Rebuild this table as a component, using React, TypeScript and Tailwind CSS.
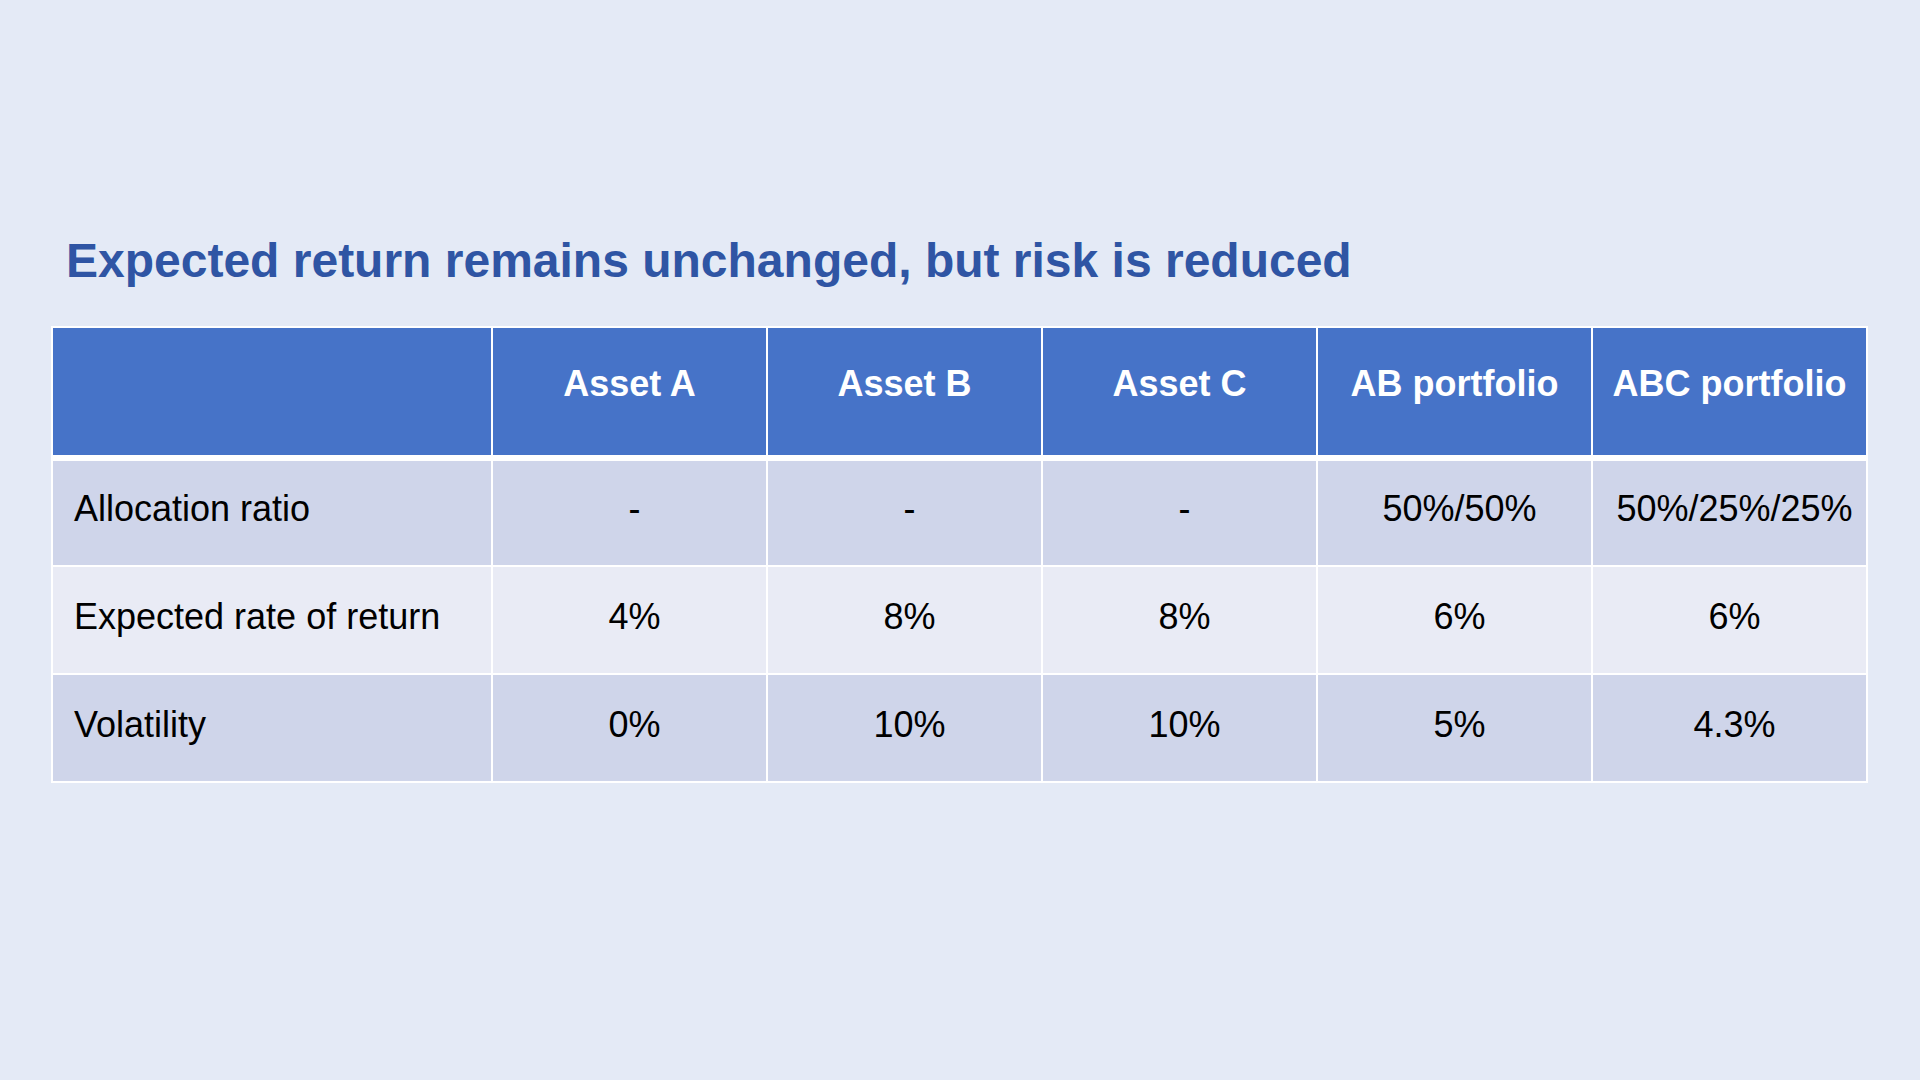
import React from "react";

const headers = ["", "Asset A", "Asset B", "Asset C", "AB portfolio", "ABC portfolio"];
const rows: { cells: string[]; bg: string }[] = [
  { cells: ["Allocation ratio", "-", "-", "-", "50%/50%", "50%/25%/25%"], bg: "bg-[#cfd5ea]" },
  { cells: ["Expected rate of return", "4%", "8%", "8%", "6%", "6%"], bg: "bg-[#e9ebf5]" },
  { cells: ["Volatility", "0%", "10%", "10%", "5%", "4.3%"], bg: "bg-[#cfd5ea]" },
];

export default function App() {
  return (
    <div
      className="w-[1920px] h-[1080px] bg-[#e4eaf6] overflow-hidden"
      style={{ fontFamily: '"Liberation Sans", Arial, sans-serif' }}
    >
      <div className="pt-[233px] pl-[66px]">
        <h1 className="text-[48px] leading-[56px] font-bold text-[#2f55a4] m-0">
          Expected return remains unchanged, but risk is reduced
        </h1>
      </div>
      <div className="mt-[37px] ml-[51px] w-[1817px] bg-white p-[2px] flex flex-col">
        <div className="grid grid-cols-[438px_repeat(5,273px)] gap-x-[2px] h-[127px]">
          {headers.map((h, i) => (
            <div
              key={i}
              className="bg-[#4673c8] text-white font-bold text-[36px] leading-[42px] pt-[35px] text-center"
            >
              {h}
            </div>
          ))}
        </div>
        <div className="h-[6px]" />
        <div className="flex flex-col gap-y-[2px]">
          {rows.map((r, ri) => (
            <div
              key={ri}
              className={`grid grid-cols-[438px_repeat(5,273px)] gap-x-[2px] ${ri === 0 ? "h-[104px]" : "h-[106px]"}`}
            >
              {r.cells.map((c, ci) => (
                <div
                  key={ci}
                  className={`${r.bg} text-black text-[36px] leading-[42px] ${ri === 0 ? "pt-[27px]" : "pt-[29px]"} ${ci === 0 ? "pl-[21px] text-left" : "pl-[10px] text-center"}`}
                >
                  {c}
                </div>
              ))}
            </div>
          ))}
        </div>
      </div>
    </div>
  );
}
